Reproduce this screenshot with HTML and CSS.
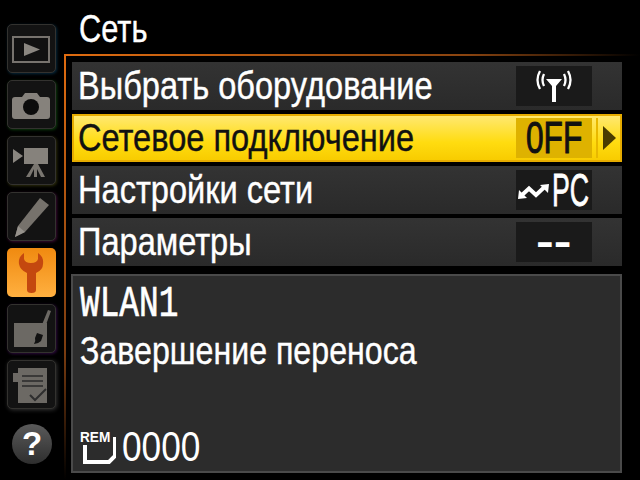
FILE: index.html

```html
<!DOCTYPE html>
<html lang="ru">
<head>
    <meta charset="UTF-8">
    <title>Сеть</title>
    <link rel="stylesheet" href="styles.css">
</head>
<body>
    <div class="screen">
        <div class="sidebar">
            <div class="tab tab-play">
                <svg viewBox="0 0 49 49"><rect x="6" y="13" width="36" height="25" fill="#111" stroke="#77736e" stroke-width="2"/><path d="M17 19l16 6.500-16 6.500z" fill="#8a8680"/></svg>
            </div>
            <div class="tab tab-shoot">
                <svg viewBox="0 0 49 49"><path d="M5 20q0-3 3-3h7l3-4h12l3 4h7q3 0 3 3v16q0 3-3 3H8q-3 0-3-3z" fill="#86827c"/><circle cx="24" cy="27" r="8" fill="#0c0c0c"/></svg>
            </div>
            <div class="tab tab-movie">
                <svg viewBox="0 0 49 49"><path d="M6 13l10 7-10 7z" fill="#8a8680"/><rect x="17" y="12" width="24" height="16" fill="#86827c"/><path d="M27 28h4l7 13h-4l-4-8v8h-3v-8l-4 8h-4z" fill="#7a7670"/></svg>
            </div>
            <div class="tab tab-pencil">
                <svg viewBox="0 0 49 49"><path d="M33 6l9 7-24 27-10 5 3-11z" fill="#76726c"/><path d="M8 45l3-11 7 6z" fill="#96928c"/></svg>
            </div>
            <div class="tab tab-active">
                <svg viewBox="0 0 49 49"><path d="M17 5Q11 9 12 16Q13 22 20 25V42Q20 45 24.500 45Q29 45 29 42V25Q36 22 36 16Q37 9 31 5V11Q30 15 24 15Q18 15 17 11Z" fill="#c4480f"/></svg>
            </div>
            <div class="tab tab-custom">
                <svg viewBox="0 0 49 49"><rect x="7" y="19" width="33" height="24" fill="#6c6964"/><path d="M41 6l3 1-8 22-4-1z" fill="#6c6964"/><path d="M30 29l6 2-2 6q-3 3-7 3 2-3 1-6z" fill="#111"/></svg>
            </div>
            <div class="tab tab-recent">
                <svg viewBox="0 0 49 49"><path d="M18 8h29v35H18z" transform="translate(-7)" fill="#6c6964"/><rect x="6" y="13" width="6" height="9" fill="#6c6964"/><path d="M15 16h21M15 21h21M15 26h21" stroke="#2a2a2a" stroke-width="1.500"/><path d="M23 35l5 5 11-11" fill="none" stroke="#2e2e2e" stroke-width="2"/></svg>
            </div>
            <div class="help">?</div>
        </div>
        <div class="main">
            <h1 class="title"><span class="narrow narrow-title">Сеть</span></h1>
            <div class="frame">
                <div class="row">
                    <span class="label"><span class="narrow">Выбрать оборудование</span></span>
                    <span class="value">
                        <svg class="antenna" viewBox="0 0 40 32"><path d="M12 9h16l-6 7v16h-4V16z" fill="#fff"/><path d="M6 1Q1 10 6 19M10 4Q7 10 10 16M34 1Q39 10 34 19M30 4Q33 10 30 16" fill="none" stroke="#fff" stroke-width="2.300"/></svg>
                    </span>
                </div>
                <div class="row row-active">
                    <span class="label"><span class="narrow">Сетевое подключение</span></span>
                    <span class="value"><span class="off">0FF</span></span>
                    <span class="sep"></span>
                    <span class="arrow"></span>
                </div>
                <div class="row">
                    <span class="label"><span class="narrow">Настройки сети</span></span>
                    <span class="value value-pc">
                        <svg class="link" viewBox="0 0 31 15"><path d="M4 11L11 4.500 18 11 26 3.500" fill="none" stroke="#fff" stroke-width="4"/><path d="M0 15l1-9 8 8zM31 0l-1 9-8-8z" fill="#fff"/></svg>
                        <span class="pc">PC</span>
                    </span>
                </div>
                <div class="row">
                    <span class="label"><span class="narrow">Параметры</span></span>
                    <span class="value"><span class="dashes">--</span></span>
                </div>
                <div class="panel">
                    <div class="wlan">WLAN1</div>
                    <div class="status"><span class="narrow narrow-status">Завершение переноса</span></div>
                    <div class="count">
                        <span class="card">
                            <svg viewBox="0 0 36 34"><path d="M5 14v17h24l6-6V6" fill="none" stroke="#fff" stroke-width="4"/></svg>
                            <span class="rem">REM</span>
                        </span>
                        <span class="digits">0000</span>
                    </div>
                </div>
            </div>
        </div>
    </div>
</body>
</html>
```

FILE: styles.css

```css
* {
    box-sizing: border-box;
}

body {
    margin: 0;
    background-color: #000;
    color: #fff;
    font-family: "Liberation Sans", sans-serif;
    overflow: hidden;
}

.screen {
    display: flex;
    width: 640px;
    height: 480px;
}

.sidebar {
    width: 64px;
    padding: 24px 0 0 7px;
    display: flex;
    flex-direction: column;
    gap: 7px;
}

.tab {
    width: 49px;
    height: 49px;
    border: 1px solid #33322f;
    border-radius: 5px;
    background-color: #131313;
}

.tab svg {
    display: block;
    width: 49px;
    height: 49px;
    margin: -1px;
}

.tab-play { box-shadow: 1px 1px 3px #06283c; }
.tab-shoot { box-shadow: 1px 1px 3px #0c3a0c; }
.tab-movie { box-shadow: 1px 1px 3px #2c2c0a; }
.tab-pencil { box-shadow: 1px 1px 3px #380a30; }
.tab-custom { box-shadow: 1px 1px 3px #2c0a3c; }
.tab-recent { box-shadow: 1px 1px 4px #333; }

.tab-active {
    border: none;
    background: linear-gradient(#f08a10, #ffb040);
}

.tab-active svg {
    margin: 0;
}

.help {
    width: 40px;
    height: 40px;
    margin: 8px 0 0 5px;
    border-radius: 50%;
    background: linear-gradient(#5a5a5a, #2e2e2e);
    font-size: 33px;
    font-weight: bold;
    line-height: 40px;
    text-align: center;
}

.narrow {
    display: inline-block;
    transform: scaleX(0.857);
    transform-origin: left center;
    white-space: nowrap;
    -webkit-text-stroke: 0.4px currentColor;
}

.narrow-title {
    transform: scaleX(0.81);
}

.narrow-status {
    transform: scaleX(0.846);
}

.main {
    flex: 1;
    display: flex;
    flex-direction: column;
}

.title {
    height: 54px;
    margin: 0;
    padding: 7px 0 0 15px;
    font-size: 38px;
    font-weight: normal;
    line-height: 44px;
}

.frame {
    flex: 1;
    display: flex;
    flex-direction: column;
    gap: 4px;
    padding: 8px 18px 7px 8px;
    background:
        linear-gradient(to right, #e06c10, #8a4410 70%, #000) top left / 100% 2px no-repeat,
        linear-gradient(#e06c10, #7a3c10 70%, #000) top left / 2px 100% no-repeat;
}

.row {
    height: 48px;
    flex: none;
    display: flex;
    align-items: center;
    padding-left: 6px;
    background: linear-gradient(#333, #2a2a2a);
}

.label {
    width: 438px;
    font-size: 38px;
}

.value {
    width: 76px;
    height: 40px;
    background-color: #1a1a1a;
    display: flex;
    align-items: center;
    justify-content: center;
    font-size: 38px;
}

.row-active {
    color: #111;
    border: 2px solid #e6ac00;
    padding-left: 4px;
    background: linear-gradient(#ffe870, #ffdc10 60%, #f8cc00);
}

.row-active .value {
    background-color: #deb200;
}

.off {
    display: inline-block;
    font-size: 44px;
    transform: scaleX(0.72);
    -webkit-text-stroke: 1px currentColor;
}

.sep {
    width: 2px;
    height: 40px;
    margin-left: 4px;
    background-color: #e8b800;
}

.arrow {
    width: 0;
    height: 0;
    margin-left: 5px;
    border-left: 13px solid #4a3c00;
    border-top: 12px solid transparent;
    border-bottom: 12px solid transparent;
}

.antenna {
    width: 40px;
    height: 32px;
}

.value-pc {
    justify-content: flex-start;
    padding-left: 2px;
}

.link {
    flex: none;
    width: 31px;
    height: 15px;
    margin-top: 2px;
}

.pc {
    display: inline-block;
    font-size: 46px;
    margin-left: 3px;
    transform: scaleX(0.58);
    transform-origin: left center;
    -webkit-text-stroke: 0.8px currentColor;
}

.dashes {
    font-weight: bold;
    transform: scaleX(1.4);
}

.panel {
    flex: 1;
    margin: 4px 0 0 -1px;
    padding: 8px 7px 6px;
    border: 2px solid #4a4a4a;
    background-color: #2c2c2c;
    display: flex;
    flex-direction: column;
}

.wlan {
    font-family: "Liberation Mono", monospace;
    font-size: 44px;
    line-height: 40px;
    transform: scaleX(0.745);
    transform-origin: left center;
    -webkit-text-stroke: 0.7px currentColor;
}

.status {
    font-size: 38px;
    line-height: 44px;
    margin-top: 5px;
}

.count {
    margin-top: auto;
    display: flex;
    align-items: flex-end;
    gap: 6px;
}

.card {
    position: relative;
    width: 36px;
    height: 34px;
}

.card svg {
    display: block;
    width: 36px;
    height: 34px;
}

.rem {
    position: absolute;
    left: 0;
    top: -1px;
    padding-right: 2px;
    font-size: 15.500px;
    font-weight: bold;
    line-height: 14px;
    background-color: #2c2c2c;
    transform: scaleX(0.88);
    transform-origin: left center;
}

.digits {
    font-size: 42px;
    line-height: 36px;
    transform: scaleX(0.84);
    transform-origin: left center;
}
```
